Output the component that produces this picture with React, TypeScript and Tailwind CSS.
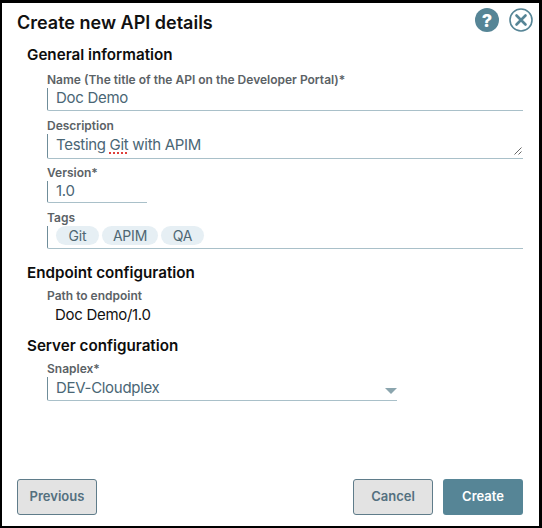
const font = { fontFamily: "Inter, 'Noto Sans', sans-serif" };

function Field({ label, width, height, className, children }: { label: string; width: string; height: string; className?: string; children: React.ReactNode }) {
  return (
    <div className={`flex flex-col ${className ?? ""}`}>
      <div className="text-[12px] leading-[16px] font-semibold text-[#5b6266]">{label}</div>
      <div className={`${width} ${height} relative flex items-center rounded-bl-[2px] border-b-[1.5px] border-l border-b-[#a9c0c9] border-l-[#6f8d9a] pl-2 text-[15px] tracking-[-0.3px] text-[#4a6675]`}>
        {children}
      </div>
    </div>
  );
}

function Tag({ text, width }: { text: string; width: string }) {
  return <span className={`${width} flex h-[19px] items-center justify-center rounded-full bg-[#e6eff4] text-[14px] tracking-[-0.2px] text-[#4e6773]`}>{text}</span>;
}

function Heading({ text }: { text: string }) {
  return <div className="pl-[25px] text-[15.2px] leading-[20px] font-semibold text-[#0d0d0d]">{text}</div>;
}

export default function App() {
  return (
    <div className="flex h-[528px] w-[542px] flex-col border-t-[3px] border-r-[3px] border-b-2 border-l-2 border-black bg-white" style={font}>
      <div className="flex h-[38px] items-center justify-between pr-[6px] pl-[15px]">
        <h1 className="text-[18px] font-semibold text-[#111]">Create new API details</h1>
        <div className="mb-[4px] flex items-center gap-[10px]">
          <svg width="24" height="24" viewBox="0 0 24 24">
            <circle cx="12" cy="12" r="12" fill="#568596" />
            <text x="12" y="18.5" textAnchor="middle" fontSize="18" fontWeight="800" fill="#fff" fontFamily="Inter, sans-serif">?</text>
          </svg>
          <svg width="24" height="24" viewBox="0 0 24 24" fill="none" stroke="#568596">
            <circle cx="12" cy="12" r="11" strokeWidth="1.6" />
            <path d="M7.5 7.5l9 9M16.5 7.5l-9 9" strokeWidth="2.6" strokeLinecap="round" />
          </svg>
        </div>
      </div>

      <div className="mt-[4px] flex flex-col">
        <Heading text="General information" />
        <div className="mt-[7px] flex flex-col gap-[6px] pl-[45px]">
          <Field label="Name (The title of the API on the Developer Portal)*" width="w-[476px]" height="h-[23px]">
            <span className="mb-[2px]">Doc Demo</span>
          </Field>
          <Field label="Description" width="w-[476px]" height="h-[25px]" className="mt-px">
            <span className="mb-[2px]">
              Testing <span className="underline decoration-[#e0413c] decoration-dotted decoration-2 underline-offset-[3px]">Git</span> with APIM
            </span>
            <svg className="absolute right-[1px] bottom-[3px]" width="8" height="8" viewBox="0 0 8 8" stroke="#666" fill="none">
              <path d="M0.5 7.5L7.5 0.5M4.5 7.5L7.5 4.5" />
            </svg>
          </Field>
          <Field label="Version*" width="w-[100px]" height="h-[22px]">1.0</Field>
          <div className="mt-px flex flex-col">
            <div className="text-[12px] leading-[16px] font-semibold text-[#5b6266]">Tags</div>
            <div className="flex h-[23px] w-[476px] items-start gap-[3px] rounded-bl-[2px] border-b-[1.5px] border-l border-b-[#a9c0c9] border-l-[#6f8d9a] pl-2">
              <Tag text="Git" width="w-[43px]" />
              <Tag text="APIM" width="w-[56px]" />
              <Tag text="QA" width="w-[43px]" />
            </div>
          </div>
        </div>

        <div className="mt-[14px]">
          <Heading text="Endpoint configuration" />
        </div>
        <div className="mt-[5px] pl-[45px]">
          <div className="text-[12px] leading-[16px] font-semibold text-[#5b6266]">Path to endpoint</div>
          <div className="pl-2 text-[15px] leading-[22px] tracking-[-0.3px] text-[#111]">Doc Demo/1.0</div>
        </div>

        <div className="mt-[10px]">
          <Heading text="Server configuration" />
        </div>
        <div className="mt-[5px] pl-[45px]">
          <Field label="Snaplex*" width="w-[350px]" height="h-[24px]">
            DEV-Cloudplex
            <span className="absolute right-0 bottom-[6px] h-0 w-0 border-x-[6px] border-t-[6px] border-x-transparent border-t-[#8ba5ae]" />
          </Field>
        </div>
      </div>

      <div className="mt-auto mb-[11px] flex items-center justify-between pr-[16px] pl-[15px]">
        <button className="h-[36px] w-[80px] rounded-[3px] border border-[#5f7c8a] bg-[#e3e3e3] text-[13px] font-semibold text-[#54707f]">Previous</button>
        <div className="flex gap-[10px]">
          <button className="h-[36px] w-[80px] rounded-[3px] border border-[#5f7c8a] bg-[#e3e3e3] text-[13px] font-semibold text-[#54707f]">Cancel</button>
          <button className="h-[36px] w-[80px] rounded-[3px] bg-[#568596] text-[13px] font-semibold text-white">Create</button>
        </div>
      </div>
    </div>
  );
}
